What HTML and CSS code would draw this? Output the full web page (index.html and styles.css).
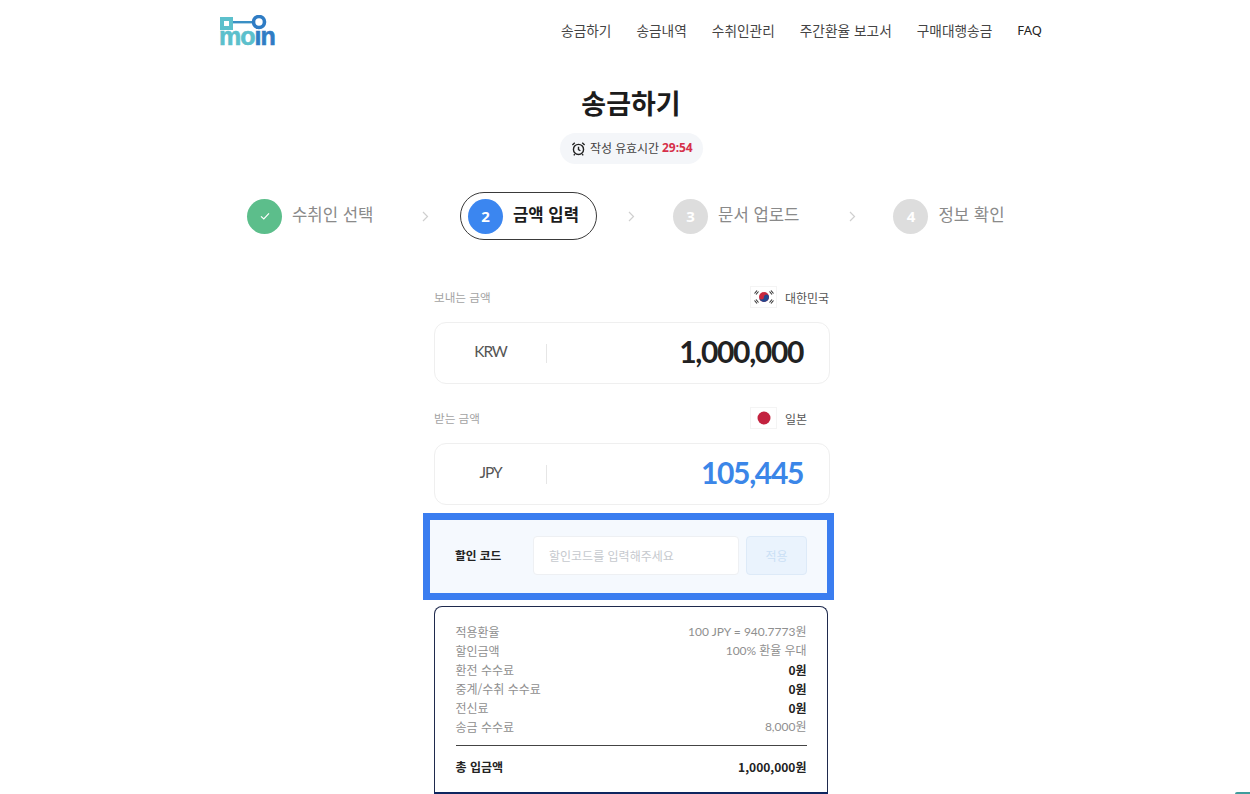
FILE: index.html
```html
<!DOCTYPE html>
<html lang="ko">
<head>
  <meta charset="UTF-8">
  <meta name="viewport" content="width=device-width, initial-scale=1.0">
  <title>송금하기 - moin</title>
  <link rel="stylesheet" href="styles.css">
</head>
<body>
  <header class="header">
    <a class="logo" href="#">
      <svg class="logo-key" width="56" height="15" viewBox="0 0 56 15">
        <rect x="3" y="4" width="9" height="9" fill="none" stroke="#5cc0cc" stroke-width="4"/>
        <rect x="14" y="6" width="22" height="2.400" fill="#3a8fc4"/>
        <circle cx="40" cy="7" r="5.500" fill="#fff" stroke="#2f7cc4" stroke-width="3.600"/>
      </svg>
      <span class="logo-text"><span class="logo-mo">mo</span><span class="logo-in">in</span></span>
    </a>
    <nav class="nav">
      <a href="#">송금하기</a>
      <a href="#">송금내역</a>
      <a href="#">수취인관리</a>
      <a href="#">주간환율 보고서</a>
      <a href="#">구매대행송금</a>
      <a href="#" class="nav-faq">FAQ</a>
    </nav>
  </header>

  <h1 class="title">송금하기</h1>
  <div class="timer-row">
    <div class="timer">
      <svg width="15" height="15" viewBox="0 0 16 16" fill="none" stroke="#222" stroke-width="1.500">
        <circle cx="8" cy="9" r="5.400"/>
        <path d="M8 6v3.200l2 1.200M1.500 4.200 4 1.800M14.500 4.200 12 1.800M4 14l-1 1.300M12 14l1 1.300"/>
      </svg>
      <span>작성 유효시간</span>
      <strong>29:54</strong>
    </div>
  </div>

  <ol class="steps">
    <li class="step step-done">
      <span class="step-num">
        <svg width="12" height="12" viewBox="0 0 12 12" fill="none" stroke="#fff" stroke-width="1.200"><path d="M2 6.400 4.800 9 10 3.400"/></svg>
      </span>
      <span class="step-label">수취인 선택</span>
    </li>
    <li class="chevron chevron-1"><svg width="7" height="11" viewBox="0 0 7 11" fill="none" stroke="#cfcfcf" stroke-width="1.200"><path d="M1 1l4.500 4.500L1 10"/></svg></li>
    <li class="step step-active">
      <span class="step-num">2</span>
      <span class="step-label">금액 입력</span>
    </li>
    <li class="chevron chevron-2"><svg width="7" height="11" viewBox="0 0 7 11" fill="none" stroke="#cfcfcf" stroke-width="1.200"><path d="M1 1l4.500 4.500L1 10"/></svg></li>
    <li class="step">
      <span class="step-num">3</span>
      <span class="step-label">문서 업로드</span>
    </li>
    <li class="chevron chevron-3"><svg width="7" height="11" viewBox="0 0 7 11" fill="none" stroke="#cfcfcf" stroke-width="1.200"><path d="M1 1l4.500 4.500L1 10"/></svg></li>
    <li class="step">
      <span class="step-num">4</span>
      <span class="step-label">정보 확인</span>
    </li>
  </ol>

  <main class="form">
    <div class="field-head">
      <span class="field-label">보내는 금액</span>
      <span class="country">
        <span class="flag">
          <svg width="24" height="18" viewBox="0 0 24 18">
            <circle cx="12" cy="9" r="5" fill="#c8283e"/>
            <path d="M7 9a5 5 0 0 0 10 0 2.500 2.500 0 0 0-5 0 2.500 2.500 0 0 1-5 0z" fill="#24488f"/>
            <g stroke="#333" stroke-width="1.100">
              <path d="M2.500 5.500 5 2.500M4 6.500 6.500 3.500M19 2.500l2.500 3M17.500 3.500l2.500 3M2.500 12.500l2.500 3M4 11.500l2.500 3M19 15.500l2.500-3M17.500 14.500l2.500-3"/>
            </g>
          </svg>
        </span>
        대한민국
      </span>
    </div>
    <div class="amount-box">
      <span class="currency">KRW</span>
      <span class="amount">1,000,000</span>
    </div>

    <div class="field-head field-head-2">
      <span class="field-label">받는 금액</span>
      <span class="country">
        <span class="flag">
          <svg width="24" height="18" viewBox="0 0 24 18"><circle cx="12" cy="9" r="6.500" fill="#c3223f"/></svg>
        </span>
        일본
      </span>
    </div>
    <div class="amount-box">
      <span class="currency">JPY</span>
      <span class="amount amount-blue">105,445</span>
    </div>

    <section class="promo">
      <span class="promo-label">할인 코드</span>
      <input class="promo-input" type="text" placeholder="할인코드를 입력해주세요">
      <button class="promo-btn" type="button">적용</button>
    </section>

    <section class="summary">
      <div class="row"><span>적용환율</span><span>100 JPY = 940.7773원</span></div>
      <div class="row"><span>할인금액</span><span>100% 환율 우대</span></div>
      <div class="row"><span>환전 수수료</span><b>0원</b></div>
      <div class="row"><span>중계/수취 수수료</span><b>0원</b></div>
      <div class="row"><span>전신료</span><b>0원</b></div>
      <div class="row"><span>송금 수수료</span><span>8,000원</span></div>
      <div class="total"><b>총 입금액</b><b>1,000,000원</b></div>
    </section>
    <div class="next-bar"></div>
  </main>

  <div class="chat-btn"></div>
</body>
</html>
```

FILE: styles.css
```css
* {
  box-sizing: border-box;
}

html, body {
  height: 794px;
  overflow: hidden;
}

body {
  margin: 0;
  position: relative;
  background-color: #FFFFFF;
  color: #222222;
  font-family: "Noto Sans CJK KR", "Noto Sans", sans-serif;
}

a {
  color: inherit;
  text-decoration: none;
}

/* header */
.header {
  display: flex;
  justify-content: space-between;
  align-items: flex-start;
  width: 823px;
  height: 60px;
  margin-left: 219px;
  padding-top: 15px;
}

.logo {
  display: flex;
  flex-direction: column;
  width: 57px;
}

.logo-key {
  display: block;
  position: relative;
  z-index: 1;
}

.logo-text {
  margin-top: -2px;
  font-family: "Liberation Sans", sans-serif;
  font-size: 25px;
  font-weight: 700;
  line-height: 16px;
  letter-spacing: -1px;
  white-space: nowrap;
  -webkit-text-stroke: 0.6px;
}

.logo-mo {
  color: #5cc0cc;
}

.logo-in {
  color: #2f7cc4;
}

.nav {
  display: flex;
  gap: 25px;
  font-size: 13.700px;
  line-height: 30px;
  color: #444444;
}

.nav-faq {
  color: #222222;
  font-family: "Noto Sans", sans-serif;
  font-size: 13px;
}

/* title */
.title {
  margin: 15px 0 0 12px;
  height: 56px;
  font-size: 27px;
  font-weight: 700;
  line-height: 56px;
  text-align: center;
  color: #1c1c1c;
}

.timer-row {
  display: flex;
  justify-content: center;
  margin: 2px 0 0 13px;
}

.timer {
  display: flex;
  align-items: center;
  gap: 3px;
  width: 143px;
  height: 31px;
  padding-left: 11px;
  border-radius: 16px;
  background-color: #F4F6F9;
  font-size: 12px;
  color: #444444;
  white-space: nowrap;
}

.timer span, .timer strong {
  padding-bottom: 2px;
}

.timer svg {
  margin-right: 1px;
}

.timer span {
  letter-spacing: -0.1px;
}

.timer strong {
  font-family: "Noto Sans", sans-serif;
  font-size: 12px;
  color: #D6304A;
}

/* steps */
.steps {
  display: flex;
  align-items: center;
  height: 48px;
  margin: 28px 0 0 247px;
  padding: 0;
  list-style: none;
}

.step {
  display: flex;
  align-items: center;
  gap: 10px;
  font-size: 16.700px;
  color: #8A8A8A;
  white-space: nowrap;
}

.step-label {
  padding-bottom: 4px;
}

.step-num {
  display: flex;
  justify-content: center;
  align-items: center;
  width: 35px;
  height: 35px;
  border-radius: 50%;
  background-color: #DDDDDD;
  color: #FFFFFF;
  font-family: "Noto Sans", sans-serif;
  font-size: 15px;
  font-weight: 700;
}

.step-done .step-num {
  background-color: #5CBE8B;
}

.step-active {
  height: 48px;
  padding: 0 17px 0 6.500px;
  border: 1.500px solid #3A3A3A;
  border-radius: 25px;
  color: #1C1C1C;
  font-weight: 700;
}

.step-active .step-num {
  background-color: #3B86F0;
}

.chevron {
  display: flex;
  align-items: center;
}

.chevron-1 {
  margin: 0 31px 0 49px;
}

.chevron-2 {
  margin: 0 38px 0 31px;
}

.chevron-3 {
  margin: 0 37px 0 50px;
}

/* amounts */
.form {
  width: 396px;
  margin: 47px 0 0 434px;
}

.field-head {
  display: flex;
  justify-content: space-between;
  align-items: center;
  height: 22px;
  padding-bottom: 2px;
  font-size: 12px;
}

.field-head-2 {
  margin-top: 24px;
}

.field-label {
  font-size: 11.600px;
  color: #A3A3A3;
}

.country {
  display: flex;
  align-items: center;
  gap: 8px;
  width: 80px;
  color: #555555;
  white-space: nowrap;
}

.flag {
  display: flex;
  flex: none;
  justify-content: center;
  align-items: center;
  width: 27px;
  height: 22px;
  border: 1px solid #F4F4F4;
}

.amount-box {
  display: flex;
  justify-content: space-between;
  align-items: center;
  height: 62px;
  margin-top: 13px;
  padding-right: 26px;
  border: 1px solid #EFEFEF;
  border-radius: 12px;
}

.currency {
  width: 112px;
  height: 19px;
  border-right: 1px solid #E6E6E6;
  font-family: "Lato", sans-serif;
  font-size: 15.500px;
  line-height: 15px;
  letter-spacing: -1.100px;
  text-align: center;
  color: #555555;
}

.amount {
  padding-bottom: 4px;
  font-family: "Lato", sans-serif;
  font-size: 30px;
  font-weight: 700;
  letter-spacing: -1.350px;
  color: #222222;
}

.amount-blue {
  color: #3B86E8;
}

/* promo code, highlighted */
.promo {
  display: flex;
  align-items: center;
  width: 411px;
  height: 87px;
  margin: 8px 0 0 -11px;
  padding: 0 0 2px 25px;
  border: 7px solid #3A7DF0;
  background-color: #F5F9FE;
}

.promo-label {
  width: 78px;
  padding-bottom: 3px;
  font-size: 11.700px;
  font-weight: 700;
  color: #222222;
}

.promo-input {
  width: 206px;
  height: 39px;
  padding: 0 15px;
  border: 1px solid #EEF0F3;
  border-radius: 4px;
  background-color: #FFFFFF;
  font-family: inherit;
  font-size: 12px;
  outline: none;
}

.promo-input::placeholder {
  color: #C6C9CE;
}

.promo-btn {
  width: 61px;
  height: 39px;
  margin-left: 7px;
  border: 1px solid #DDEAF8;
  border-radius: 4px;
  background-color: #EAF3FD;
  font-family: inherit;
  font-size: 12px;
  color: #CBE0F5;
}

/* summary */
.summary {
  width: 394px;
  height: 186px;
  margin-top: 6px;
  padding: 16px 20.500px 0 20.500px;
  border: 1.500px solid #1F2A4D;
  border-bottom: 0;
  border-radius: 8px 8px 0 0;
  font-size: 12px;
  line-height: 18.900px;
  color: #8F8F8F;
}

.row {
  display: flex;
  justify-content: space-between;
}

.row span:last-child {
  font-family: "Lato", "Noto Sans CJK KR", sans-serif;
}

.row b {
  color: #222222;
}

.total {
  display: flex;
  justify-content: space-between;
  margin-top: 8.500px;
  padding-top: 12px;
  border-top: 1.500px solid #444444;
  color: #222222;
}

.next-bar {
  width: 394px;
  height: 2px;
  background-color: #0E2660;
}

/* floating button, cut off by the window */
.chat-btn {
  position: absolute;
  top: 792px;
  left: 1235px;
  width: 15px;
  height: 2px;
  border-radius: 3px 0 0 0;
  background-color: #3F9C9C;
}
```
